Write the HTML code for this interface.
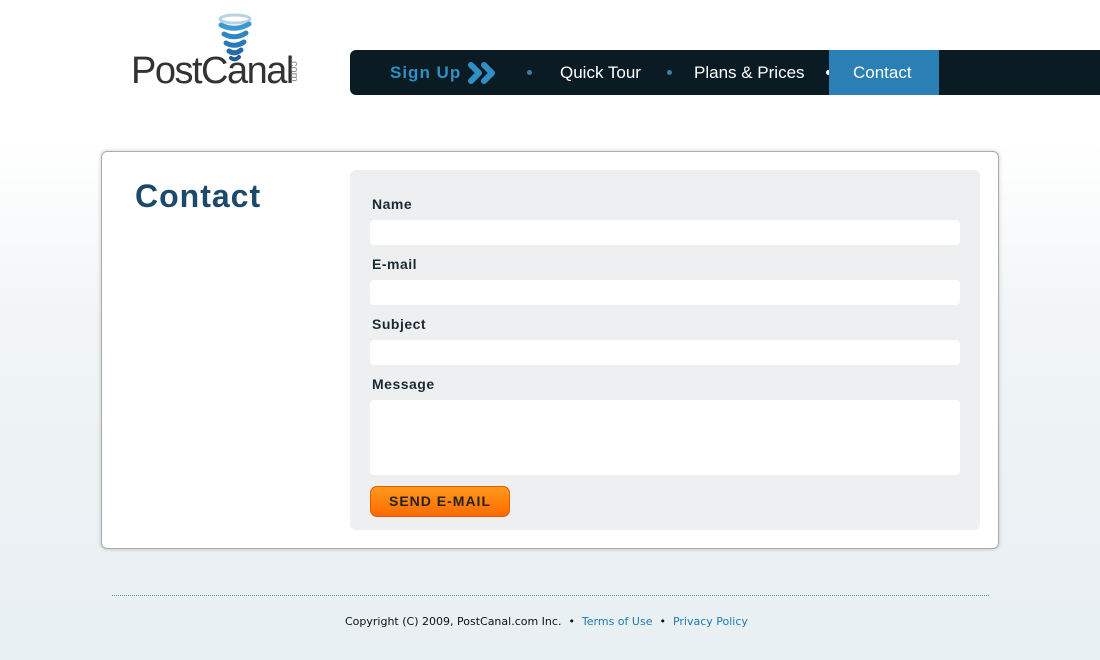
<!DOCTYPE html>
<html><head><style>
body{margin:0;width:1100px;height:660px;overflow:hidden;font-family:"Liberation Sans",sans-serif;background:linear-gradient(#fff 0,#fff 140px,#f0f4f6 330px,#e8eff2 660px);position:relative}
.logo{position:absolute;left:131px;top:52px;font-size:38px;color:#333;letter-spacing:-1.5px;font-family:"Liberation Sans",sans-serif;line-height:38px}
.com{position:absolute;left:300px;top:58px;font-size:11px;color:#888;transform:rotate(90deg);transform-origin:left top}
.nav{position:absolute;left:350px;top:50px;width:750px;height:45px;background:#0a1b24;border-radius:6px 0 0 6px}
.nav span{position:absolute;top:13px;font-size:17px;color:#fff}
.dot{position:absolute;top:20px;width:5px;height:5px;border-radius:50%;background:#3a7fa3}
.box{position:absolute;left:101px;top:151px;width:896px;height:396px;background:#fff;border:1px solid #aaa;border-radius:6px;box-shadow:0 0 4px rgba(0,0,0,.2)}
h1{position:absolute;left:135px;top:178px;margin:0;font-size:32px;color:#1d4a6a;letter-spacing:1px}
.form{position:absolute;left:350px;top:170px;width:630px;height:360px;background:#eeeff0;border-radius:6px}
.lbl{position:absolute;left:22px;font-size:14px;font-weight:bold;color:#1a2a33;letter-spacing:.5px}
.in{position:absolute;left:20px;width:590px;height:25px;background:#fff;border-radius:4px}
.btn{position:absolute;left:20px;top:316px;width:138px;height:29px;border-radius:7px;background:linear-gradient(#ff9a1a,#ff6a00);border:1px solid #e55a00;font-size:14px;font-weight:bold;color:#222;text-align:center;line-height:29px;letter-spacing:1px}
.line{position:absolute;left:112px;top:595px;width:877px;border-top:1px dotted #4a8fb0}
.foot{position:absolute;top:615px;left:345px;font-size:11px;color:#111;font-family:"DejaVu Sans",sans-serif;letter-spacing:0;white-space:nowrap}
.foot a{color:#1f7ab0;text-decoration:none}
</style></head><body>
<svg style="position:absolute;left:215px;top:12px" width="40" height="56" viewBox="0 0 40 56">
<g fill="none" stroke-linecap="round">
<ellipse cx="20" cy="7" rx="15" ry="4" stroke="#b8d4e4" stroke-width="3"/>
<path d="M6 13 Q20 20 34 12" stroke="#3c9ad0" stroke-width="5"/>
<path d="M9 22 Q20 28 31 21" stroke="#2e86c2" stroke-width="5"/>
<path d="M11 31 Q20 36 29 30" stroke="#2a78b6" stroke-width="5"/>
<path d="M14 39 Q20 43 26 38" stroke="#2569a8" stroke-width="5"/>
<path d="M16 46 Q20 49 24 45" stroke="#215c99" stroke-width="4"/>
</g></svg>
<div class="logo">PostCanal</div><div class="com">.com</div>
<div class="nav">
<span style="left:40px;color:#2f8fc6;font-weight:bold;letter-spacing:1px">Sign Up</span>
<svg style="position:absolute;left:118px;top:12px" width="32" height="22" viewBox="0 0 32 22"><path d="M3 3 L11 11 L3 19 M16 3 L24 11 L16 19" fill="none" stroke="#2f8fc6" stroke-width="6" stroke-linejoin="round" stroke-linecap="round"/></svg>
<div class="dot" style="left:177px"></div>
<span style="left:210px">Quick Tour</span>
<div class="dot" style="left:317px"></div>
<span style="left:344px">Plans &amp; Prices</span>
<div class="dot" style="left:476px;background:#fff"></div>
<div style="position:absolute;left:479px;top:0;width:110px;height:45px;background:#2a7fb4"></div>
<span style="left:503px">Contact</span>
</div>
<div class="box"></div>
<h1>Contact</h1>
<div class="form">
<div class="lbl" style="top:26px">Name</div><div class="in" style="top:50px"></div>
<div class="lbl" style="top:86px">E-mail</div><div class="in" style="top:110px"></div>
<div class="lbl" style="top:146px">Subject</div><div class="in" style="top:170px"></div>
<div class="lbl" style="top:206px">Message</div><div class="in" style="top:230px;height:75px"></div>
<div class="btn">SEND E-MAIL</div>
</div>
<div class="line"></div>
<div class="foot">Copyright (C) 2009, PostCanal.com Inc. &nbsp;•&nbsp; <a>Terms of Use</a> &nbsp;•&nbsp; <a>Privacy Policy</a></div>
</body></html>
